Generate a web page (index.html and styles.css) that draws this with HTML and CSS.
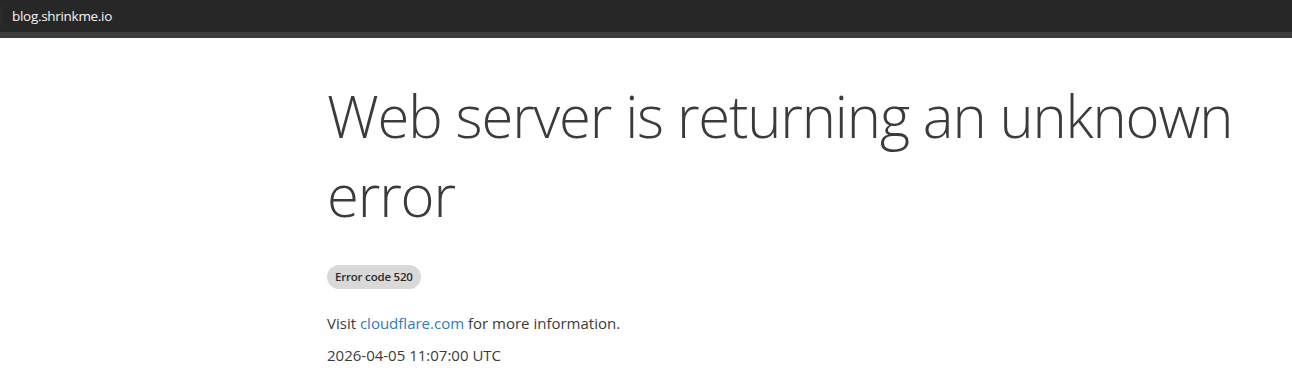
FILE: index.html
```html
<!DOCTYPE html>
<html lang="en">
<head>
<meta charset="utf-8">
<title>blog.shrinkme.io | 520: Web server is returning an unknown error</title>
<link rel="stylesheet" href="styles.css">
</head>
<body>
<header class="topbar">
  <div class="addr"><span class="addr-text">blog.shrinkme.io</span></div>
</header>
<div class="stripe"></div>
<main class="content">
  <h1 class="title">Web server is returning an unknown error</h1>
  <span class="badge">Error code 520</span>
  <p class="info">Visit <a class="link" href="#">cloudflare.com</a> for more information.</p>
  <p class="time">2026-04-05 11:07:00 UTC</p>
</main>
</body>
</html>
```
FILE: styles.css
```css
html, body {
  margin: 0;
  padding: 0;
  background: #ffffff;
}
body {
  font-family: "Open Sans", "Noto Sans", "Liberation Sans", sans-serif;
  color: #3b3b3b;
}
.topbar {
  height: 32px;
  background: #272727;
  display: flex;
  align-items: center;
}
.addr {
  height: 22px;
  display: flex;
  align-items: center;
  padding-left: 11px;
  border-left: 3px solid #2f2f2f;
  border-radius: 11px 0 0 11px;
  margin-left: -2px;
}
.addr-text {
  color: #f5f5f5;
  font-size: 13.5px;
  letter-spacing: -0.3px;
}
.stripe {
  height: 6px;
  background: #3c3c3c;
}
.content {
  padding-left: 327px;
  padding-right: 20px;
  padding-top: 38px;
}
.title {
  margin: 0;
  font-size: 58px;
  font-weight: 300;
  line-height: 79px;
  color: #3b3b3b;
  max-width: 945px;
  letter-spacing: -1.15px;
}
.badge {
  display: inline-block;
  margin-top: 31px;
  background: #d9d9d9;
  border-radius: 12px;
  padding: 0 8px;
  height: 24px;
  line-height: 24px;
  font-size: 11.5px;
  font-weight: 600;
  letter-spacing: -0.2px;
  color: #2b2b2b;
}
.info {
  margin: 23px 0 0;
  font-size: 15px;
  line-height: 22px;
}
.link {
  color: #2f7bbf;
  text-decoration: none;
}
.time {
  margin: 10px 0 0;
  font-size: 15px;
  line-height: 22px;
}
```
